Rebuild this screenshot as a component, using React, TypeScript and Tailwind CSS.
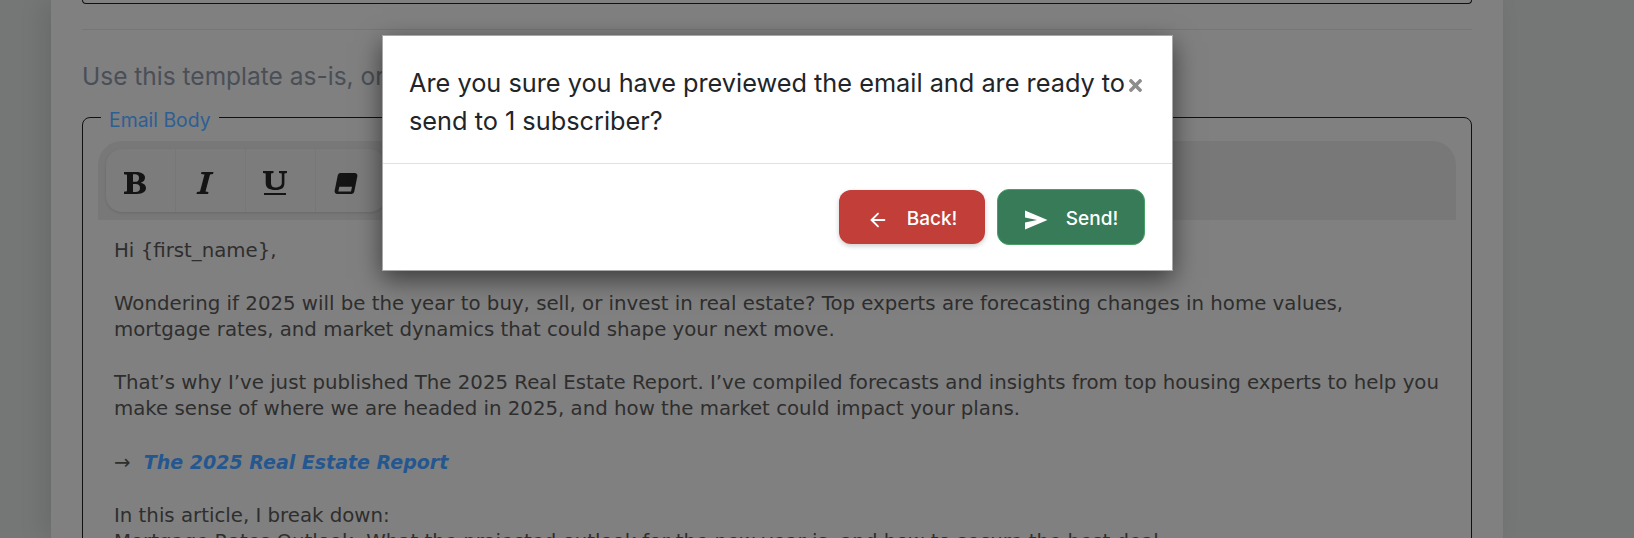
import { ArrowLeft } from "lucide-react";
import { FaTimes } from "react-icons/fa";

const bodyFont = "font-['DejaVu_Sans',sans-serif]";
const uiFont = "font-['Inter','Noto_Sans',sans-serif]";

function ToolButton({ children, last }: { children: React.ReactNode; last?: boolean }) {
  return (
    <div className={`flex h-full w-[70px] items-center justify-center pr-[11px] pt-[5px] text-[#141414] ${last ? "" : "border-r border-[#777777]"}`}>
      {children}
    </div>
  );
}

export default function App() {
  return (
    <div className="relative h-[538px] w-[1634px] overflow-hidden bg-[#757676]">
      <div className="ml-[51px] h-[538px] w-[1452px] bg-[#808080] px-[31px] shadow-[-8px_0_24px_rgba(0,0,0,0.1)]">
        <div className="h-[4px] rounded-b-lg border-x border-b border-[#111111]" />
        <div className="mt-[25px] h-px bg-[#767676]" />
        <p className={`mt-[30px] text-[24.5px] leading-[32px] text-[#4a4f57] ${uiFont}`}>
          Use this template as-is, or customize
        </p>
        <fieldset className="mt-[13px] rounded-lg border border-[#111111] px-[15px] pb-4">
          <legend className={`ml-[3px] translate-y-[3px] px-[8px] text-[19.400px] leading-[24px] text-[#2c5f94] ${uiFont}`}>Email Body</legend>
          <div className="mt-[12px] flex h-[79px] items-start rounded-t-[24px] bg-[#787878] px-2 pt-2">
            <div className="flex h-[63px] items-center rounded-[16px] bg-[#7c7c7c] shadow-[0_1px_3px_rgba(0,0,0,0.12)]">
              <ToolButton>
                <svg width="24" height="24" viewBox="0 0 24 24" fill="currentColor">
                  <path fillRule="evenodd" d="M1 1h12c6 0 9 2.500 9 5.800 0 2.600-1.800 4.300-4.300 5 3.200.6 5.300 2.600 5.300 5.300 0 3.700-3.400 5.900-9 5.900H1v-2.200l3-.5V3.700l-3-.5ZM10 3.200v7.600h2c2.600 0 4-1.400 4-3.900s-1.400-3.700-4-3.700ZM10 13v8h2.500c3 0 4.500-1.400 4.500-4s-1.500-4-4.500-4Z" />
                </svg>
              </ToolButton>
              <ToolButton>
                <svg width="18" height="24" viewBox="0 0 18 24" fill="currentColor">
                  <path d="M5.500 1H17.500L17 3l-3 .5L9.500 20.500l3 .5-.5 2H.5l.5-2 3-.5L8.500 3.500 5 3Z" />
                </svg>
              </ToolButton>
              <ToolButton>
                <svg width="24" height="26" viewBox="0 0 24 26" fill="currentColor">
                  <path d="M0 1h10.500v2L8 3.500V13c0 3 1.500 4.500 4.500 4.500S18.800 16 18.800 13V3.500L16 3V1h8v2l-2.600.5V13c0 5-3 7-9 7S2.700 18 2.700 13V3.500L0 3Z" />
                  <path d="M1 23h22v2H1Z" />
                </svg>
              </ToolButton>
              <ToolButton last>
                <svg width="26" height="25" viewBox="0 0 24 24" fill="currentColor">
                  <path fillRule="evenodd" d="M7.500 2h13a2.500 2.500 0 0 1 2.400 3l-3 15a2.500 2.500 0 0 1-2.400 2H3.500A2.500 2.500 0 0 1 1.100 19l3-15A3 3 0 0 1 7.500 2ZM5.600 15 4.600 19.600h12.200l1-4.600Z" />
                </svg>
              </ToolButton>
            </div>
          </div>
          <div className={`px-[16px] pt-[18px] text-[19.760px] leading-[26.4px] text-[#2e2e2e] ${bodyFont}`}>
            <p>Hi {"{first_name}"},</p>
            <p className="mt-[26.4px]">Wondering if 2025 will be the year to buy, sell, or invest in real estate? Top experts are forecasting changes in home values,<br />mortgage rates, and market dynamics that could shape your next move.</p>
            <p className="mt-[26.4px]">That’s why I’ve just published The 2025 Real Estate Report. I’ve compiled forecasts and insights from top housing experts to help you<br />make sense of where we are headed in 2025, and how the market could impact your plans.</p>
            <p className="mt-[26.4px]">→ <a className="ml-[7px] text-[19px] font-bold italic text-[#24578f]">The 2025 Real Estate Report</a></p>
            <p className="mt-[26.4px]">In this article, I break down:</p>
            <p>Mortgage Rates Outlook: What the projected outlook for the new year is, and how to secure the best deal</p>
          </div>
        </fieldset>
      </div>

      <div className="absolute left-[382px] top-[35px] h-[236px] w-[791px] border border-[#a8a8a8] bg-white shadow-[0_8px_24px_rgba(0,0,0,0.55)]">
        <div className="relative h-[128px] border-b border-[#dee2e6] pl-[26px] pt-[28px]">
          <p className={`text-[25.300px] leading-[38px] text-[#212529] ${uiFont}`}>
            Are you sure you have previewed the email and are ready to<br />send to 1 subscriber?
          </p>
          <FaTimes size={19} className="absolute right-[27px] top-[40px] text-[#8d8d8d]" />
        </div>
        <div className="flex items-center justify-end gap-3 pr-[27px] pt-[25px]">
          <button className={`flex h-[54px] w-[146px] items-center justify-center gap-[18px] rounded-[12px] bg-[#c13e39] pt-[5px] text-[19px] font-medium text-white shadow-[0_2px_5px_rgba(0,0,0,0.2)] ${uiFont}`}>
            <ArrowLeft size={22} />
            Back!
          </button>
          <button className={`flex h-[56px] w-[148px] items-center justify-center gap-[18px] rounded-[12px] border border-[#47a065] bg-[#387b59] pt-[5px] text-[19px] font-medium text-white ${uiFont}`}>
            <svg width="24" height="20" viewBox="0 0 24 20" fill="currentColor"><path d="M1 0.500 L23.500 10 L1 19.500 L1 12.500 L13 10 L1 7.500 Z" /></svg>
            Send!
          </button>
        </div>
      </div>
    </div>
  );
}
